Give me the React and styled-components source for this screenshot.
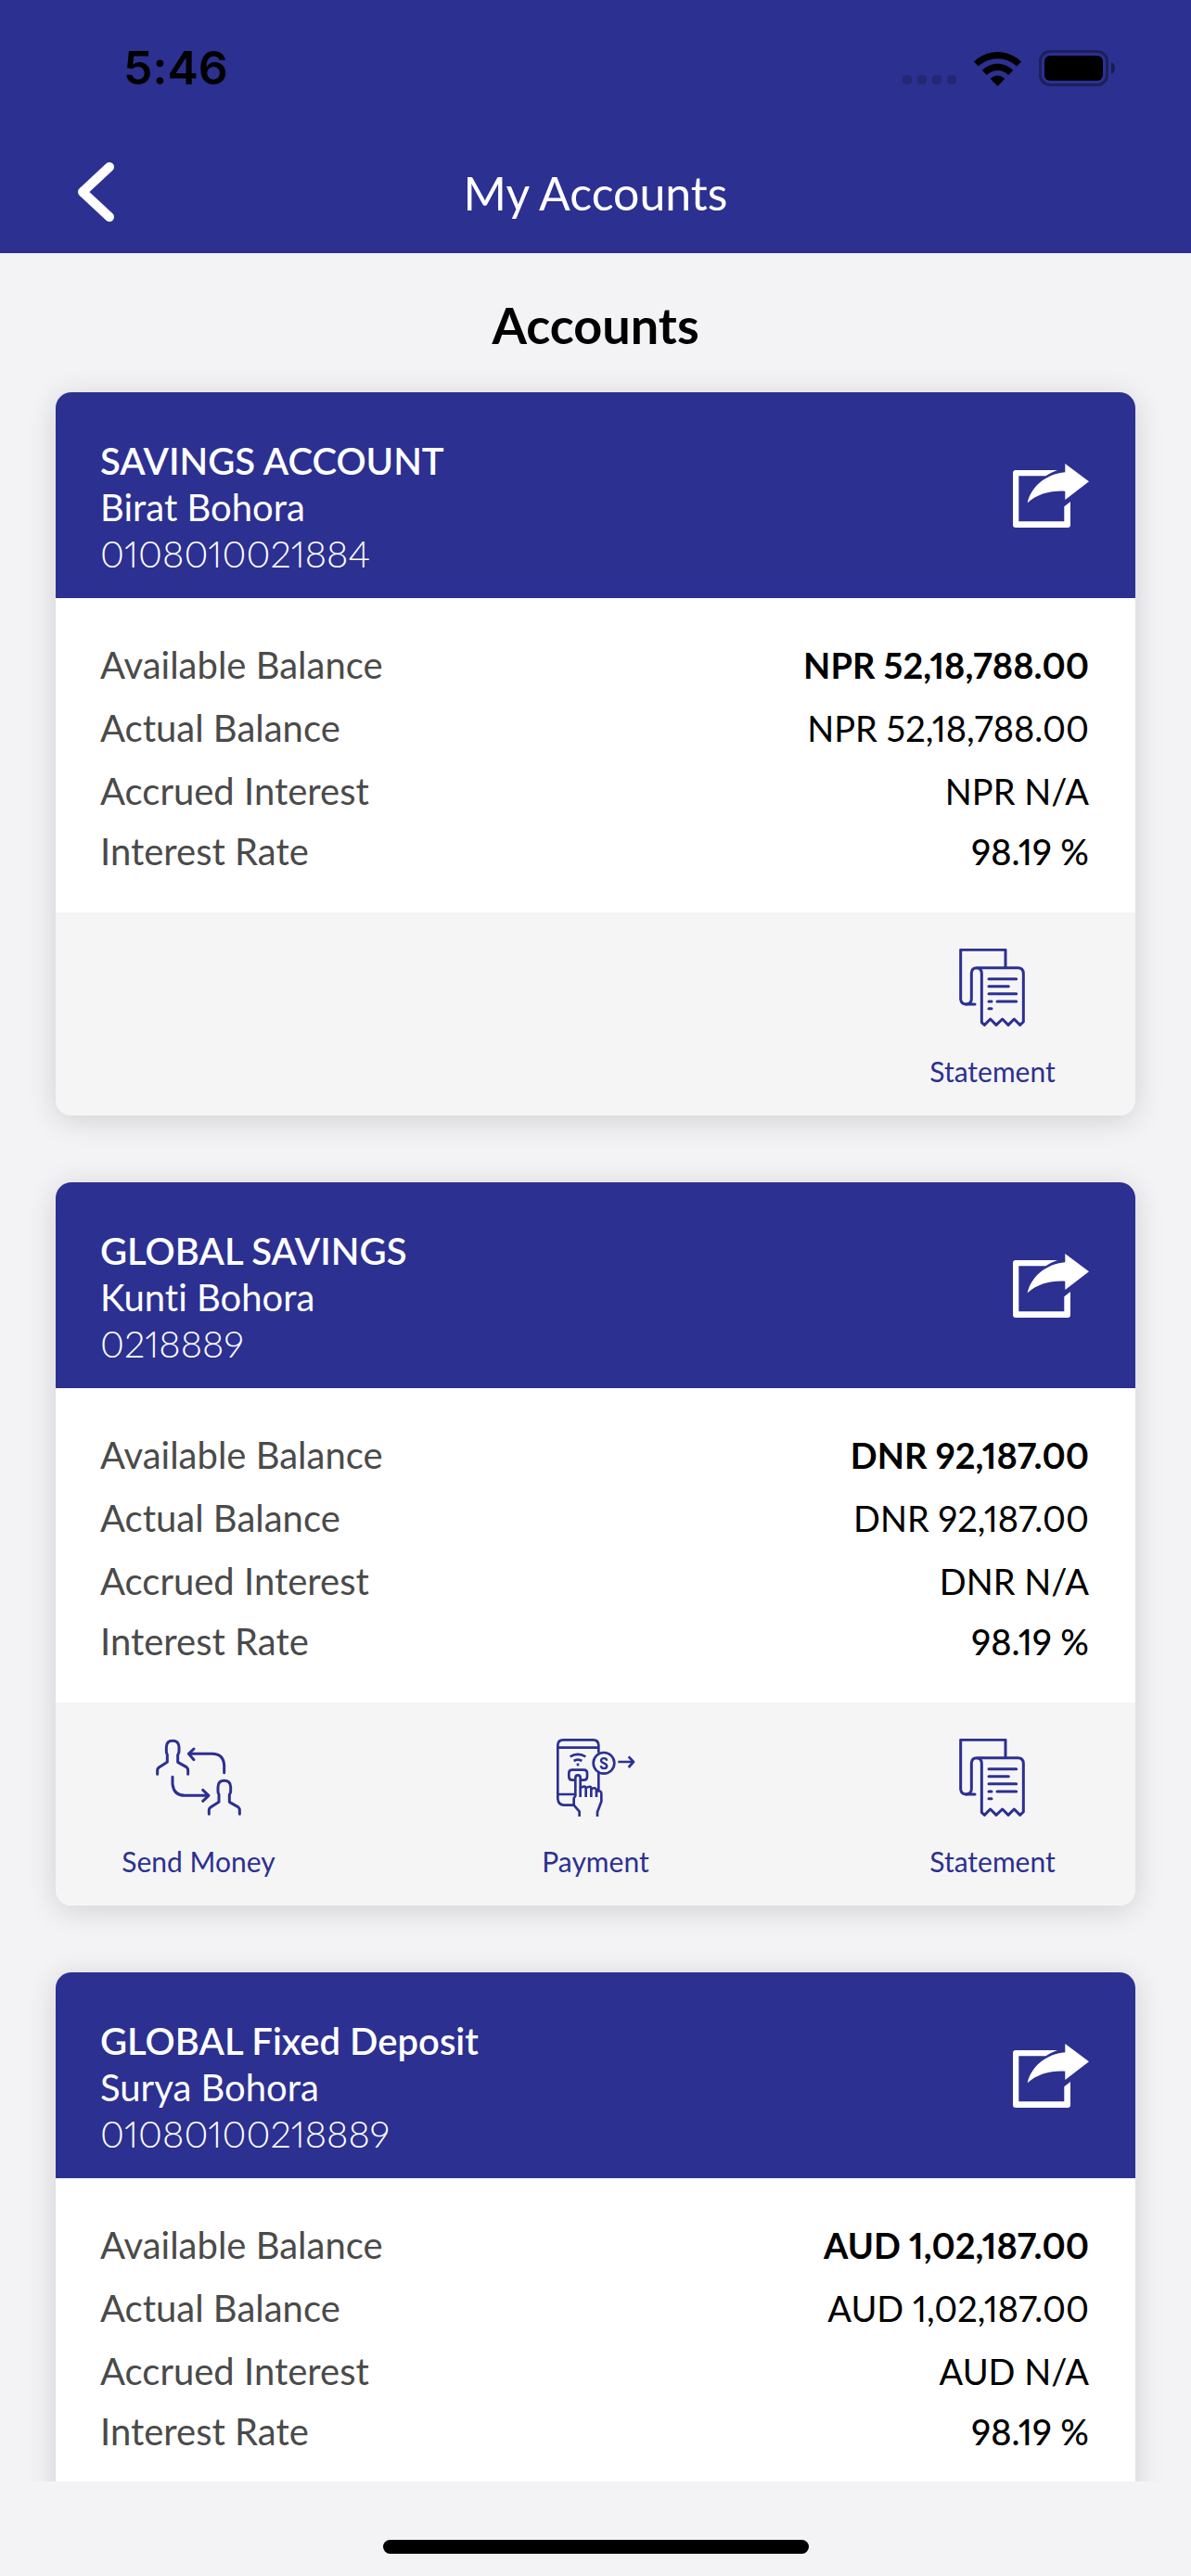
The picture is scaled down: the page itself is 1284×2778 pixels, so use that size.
import React from "react";
import styled, { createGlobalStyle } from "styled-components";

const BLUE = "#2c3091";
const PAGE = "#f3f3f5";

const GlobalStyle = createGlobalStyle`
  * { box-sizing: border-box; }
  body {
    margin: 0;
    background: ${PAGE};
    font-family: Lato, "Open Sans", sans-serif;
    font-variant-ligatures: none;
    font-variant-numeric: proportional-nums;
    color: #000;
  }
  button { font: inherit; border: 0; background: none; padding: 0; cursor: pointer; }
`;

const Screen = styled.div`
  height: 100vh;
  display: flex;
  flex-direction: column;
`;

const TopArea = styled.header`
  flex: none;
  background: ${BLUE};
  padding-bottom: 5px;
`;

const StatusBar = styled.div`
  height: 146px;
  padding: 0 82px 0 133px;
  display: flex;
  align-items: center;
  justify-content: space-between;
`;

const Clock = styled.time`
  font-family: Inter, sans-serif;
  font-size: 50px;
  font-weight: 600;
  line-height: 60px;
`;

const StatusIcons = styled.div`
  display: flex;
  align-items: flex-end;
  gap: 19px;
`;

const SignalDots = styled.div`
  display: flex;
  gap: 6px;
  padding-bottom: 2px;
`;

const Dot = styled.span`
  width: 10px;
  height: 10px;
  border-radius: 4px;
  background: #25286f;
`;

const NavBar = styled.nav`
  height: 122px;
  padding: 0 84px;
  display: grid;
  grid-template-columns: 40px 1fr 40px;
  align-items: center;
`;

const IconButton = styled.button`
  display: flex;
  flex: none;
`;

const NavTitle = styled.h1`
  margin: 0;
  padding-top: 2px;
  color: #fff;
  font-size: 50px;
  font-weight: 400;
  line-height: 60px;
  text-align: center;
`;

const Scroller = styled.main`
  flex: 1;
  min-height: 0;
  overflow-y: auto;
  scrollbar-width: none;
  padding: 46px 60px 0;
`;

const SectionTitle = styled.h2`
  margin: 0 0 40px;
  font-size: 54px;
  font-weight: 700;
  line-height: 64px;
  text-align: center;
`;

const CardList = styled.div`
  display: flex;
  flex-direction: column;
  gap: 72px;
`;

const Card = styled.article`
  flex: none;
  background: #fff;
  border-radius: 17px;
  overflow: hidden;
  box-shadow: 0 5px 32px rgba(0, 10, 20, 0.14);
`;

const CardHead = styled.div`
  display: flex;
  align-items: center;
  justify-content: space-between;
  padding: 0 50px 0 48px;
  background: ${BLUE};
  color: #fff;
`;

const Owner = styled.div`
  padding: 49px 0 23px;
`;

const OwnerLine = styled.p`
  margin: 0;
  font-size: 40px;
  font-weight: ${(p) => p.$weight};
  line-height: 50px;
`;

const Balances = styled.div`
  padding: 38px 50px 35px 48px;
`;

const BalanceTable = styled.table`
  width: 100%;
  border-collapse: collapse;
`;

const BalanceRow = styled.tr`
  height: 68px;
  &:last-child { height: 62px; }
`;

const Label = styled.th`
  padding: 0;
  color: #4a4a4a;
  font-size: 40px;
  font-weight: 400;
  line-height: 50px;
  text-align: left;
`;

const Value = styled.td`
  padding: 0;
  font-size: 38px;
  font-weight: ${(p) => p.$weight};
  line-height: 50px;
  text-align: right;
`;

const Actions = styled.div`
  display: flex;
  justify-content: space-between;
  min-height: 219px;
  padding: 39px 47px 28px;
  background: #f5f5f5;
  & > :only-child { margin-left: auto; }
`;

const Action = styled.button`
  width: 20%;
  display: flex;
  flex-direction: column;
  align-items: center;
  gap: 28px;
  color: ${BLUE};
`;

const ActionLabel = styled.span`
  font-size: 30px;
  line-height: 40px;
  white-space: nowrap;
`;

const LineArt = styled.svg`
  width: 96px;
  height: 84px;
  fill: none;
  stroke: currentColor;
  stroke-width: ${(p) => p.$stroke};
  stroke-linecap: ${(p) => p.$cap || "round"};
  stroke-linejoin: round;
`;

const HomeArea = styled.footer`
  flex: none;
  height: 102px;
  display: flex;
  justify-content: center;
  align-items: flex-end;
  padding-bottom: 24px;
`;

const HomeBar = styled.div`
  width: 459px;
  height: 15px;
  border-radius: 8px;
  background: #000;
`;

const WifiIcon = () => (
  <svg width="51" height="37" viewBox="0 0 51 37" aria-hidden="true">
    <path d="M0 10.6 C14 -3.5 37 -3.5 51 10.6 L46.2 15.6 C34.5 4.5 16.5 4.5 4.8 15.6 Z" />
    <path d="M8.8 19.8 C18.5 10.4 32.5 10.4 42.2 19.8 L37.2 25 C30.5 18.4 20.5 18.4 13.8 25 Z" />
    <path d="M17.8 29 C22 24.2 29 24.2 33.2 29 L25.5 37 Z" />
  </svg>
);

const BatteryIcon = () => (
  <svg width="82" height="39" viewBox="0 0 82 39" aria-hidden="true">
    <rect x="1.5" y="1.5" width="72" height="36" rx="10.5" fill="none" stroke="#1d1f5c" strokeWidth="3" />
    <rect x="6" y="6" width="63" height="27" rx="6" />
    <path d="M78 13 Q82 15 82 19.5 Q82 24 78 26 Z" fill="#1a1c4e" />
  </svg>
);

const BackIcon = () => (
  <svg width="40" height="66" viewBox="0 0 40 66" fill="none" stroke="#fff" strokeWidth="10" strokeLinecap="round" strokeLinejoin="round" aria-hidden="true">
    <path d="M34 6 L5 33 L34 60" />
  </svg>
);

const ShareIcon = () => (
  <svg width="82" height="69" viewBox="0 0 82 69" fill="#fff" aria-hidden="true">
    <path d="M48 7 H3 Q0 7 0 10 V66 Q0 69 3 69 H59 Q62 69 62 66 V41 L55.3 46.3 V62.3 H6.3 V13.3 H35.3 Q41 9.5 48 7 Z" />
    <path d="M56.3 0 L82 19.3 L56.3 39 V29.7 C40 29 26 33 15.7 42.3 C19 26 35 11 56.3 9.3 Z" />
  </svg>
);

const Person = (props) => (
  <path
    {...props}
    d="M389 280 V268 Q389 262 394 258 L421 241 V217 Q418 212 418 206 V192 Q419 172 438 172 Q458 172 459 192 V206 Q459 212 455 217 V241 L483 257 Q488 261 488 268 V280"
  />
);

const SendIcon = () => (
  <LineArt viewBox="378 165 288 252" $stroke="9" aria-hidden="true">
    <Person />
    <Person transform="translate(167 129)" />
    <path d="M605 275 V252 Q603 214 566 214 H490 M507 198 L490 214 L507 233" />
    <path d="M438 289 V312 Q442 349 478 349 H555 M536 331 L555 349 L536 367" />
  </LineArt>
);

const PaymentIcon = () => (
  <LineArt viewBox="282 165 288 252" $stroke="8" $cap="butt" aria-hidden="true">
    <path d="M436 211 V187 Q436 169 418 169 H322 Q304 169 304 187 V360 Q306 379 324 380 H358" />
    <path d="M304 194 H436 M304 345 H360 M436 276 V334" />
    <circle cx="453" cy="244" r="34" />
    <path d="M463 236 C461 226 445 226 444 236 C444 245 463 243 463 254 C462 264 445 264 443 253" strokeWidth="7" />
    <path d="M499 240 H549 M533 223 L549 240 L533 258" />
    <path d="M344 223 Q369 208 394 223 M356 237 Q369 229 382 237" />
    <path d="M365 249 H373" />
    <path d="M361 299 H351 Q340 299 340 288 V276 Q340 266 351 266 H388 Q399 266 399 276 V288 Q399 299 388 299 H378" />
    <path d="M377 354 V292 Q377 283 369 283 Q361 283 361 292 V350 L356 358 V380 L374 401 V417" />
    <path d="M377 324 Q394 315 395 326 V354 M395 325 Q411 315 412 326 V354 M412 328 Q427 320 429 331 V354" />
    <path d="M429 335 Q445 331 445 343 V368 L432 403 V417" />
  </LineArt>
);

const StatementIcon = () => (
  <LineArt viewBox="186 159 288 252" $stroke="9" aria-hidden="true">
    <path d="M372 218 V163 H227 V323 Q229 339 245 339 Q262 338 262 322 V238 Q263 221 279 221 Q295 222 295 240 V398 L304 406 L323 387 L342 406 L362 387 L381 406 L400 387 L419 406 L430 396 V240 Q430 221 412 221 H279" />
    <path d="M245 339 H273 M318 257 H407 M318 281 H382 M318 305 H407 M318 330 H327 M345 330 H407 M318 353 H327" />
  </LineArt>
);

const ACTIONS = {
  send: { label: "Send Money", Icon: SendIcon },
  payment: { label: "Payment", Icon: PaymentIcon },
  statement: { label: "Statement", Icon: StatementIcon },
};

const ACCOUNTS = [
  {
    type: "SAVINGS ACCOUNT",
    owner: "Birat Bohora",
    number: "0108010021884",
    currency: "NPR",
    amount: "52,18,788.00",
    actions: ["statement"],
  },
  {
    type: "GLOBAL SAVINGS",
    owner: "Kunti Bohora",
    number: "0218889",
    currency: "DNR",
    amount: "92,187.00",
    actions: ["send", "payment", "statement"],
  },
  {
    type: "GLOBAL Fixed Deposit",
    owner: "Surya Bohora",
    number: "01080100218889",
    currency: "AUD",
    amount: "1,02,187.00",
    actions: [],
  },
];

function AccountCard({ account }) {
  const { type, owner, number, currency, amount, actions } = account;
  const rows = [
    { label: "Available Balance", value: `${currency} ${amount}`, weight: 700 },
    { label: "Actual Balance", value: `${currency} ${amount}`, weight: 400 },
    { label: "Accrued Interest", value: `${currency} N/A`, weight: 400 },
    { label: "Interest Rate", value: "98.19 %", weight: 500 },
  ];
  return (
    <Card>
      <CardHead>
        <Owner>
          <OwnerLine $weight={600}>{type}</OwnerLine>
          <OwnerLine $weight={400}>{owner}</OwnerLine>
          <OwnerLine $weight={300}>{number}</OwnerLine>
        </Owner>
        <IconButton type="button" aria-label="Share account">
          <ShareIcon />
        </IconButton>
      </CardHead>
      <Balances>
        <BalanceTable>
          <tbody>
            {rows.map((row) => (
              <BalanceRow key={row.label}>
                <Label scope="row">{row.label}</Label>
                <Value $weight={row.weight}>{row.value}</Value>
              </BalanceRow>
            ))}
          </tbody>
        </BalanceTable>
      </Balances>
      <Actions>
        {actions.map((key) => {
          const { label, Icon } = ACTIONS[key];
          return (
            <Action type="button" key={key}>
              <Icon />
              <ActionLabel>{label}</ActionLabel>
            </Action>
          );
        })}
      </Actions>
    </Card>
  );
}

export default function App() {
  return (
    <Screen>
      <GlobalStyle />
      <TopArea>
        <StatusBar>
          <Clock>5:46</Clock>
          <StatusIcons>
            <SignalDots>
              <Dot />
              <Dot />
              <Dot />
              <Dot />
            </SignalDots>
            <WifiIcon />
            <BatteryIcon />
          </StatusIcons>
        </StatusBar>
        <NavBar>
          <IconButton type="button" aria-label="Back">
            <BackIcon />
          </IconButton>
          <NavTitle>My Accounts</NavTitle>
        </NavBar>
      </TopArea>
      <Scroller>
        <SectionTitle>Accounts</SectionTitle>
        <CardList>
          {ACCOUNTS.map((account) => (
            <AccountCard key={account.number} account={account} />
          ))}
        </CardList>
      </Scroller>
      <HomeArea>
        <HomeBar />
      </HomeArea>
    </Screen>
  );
}
